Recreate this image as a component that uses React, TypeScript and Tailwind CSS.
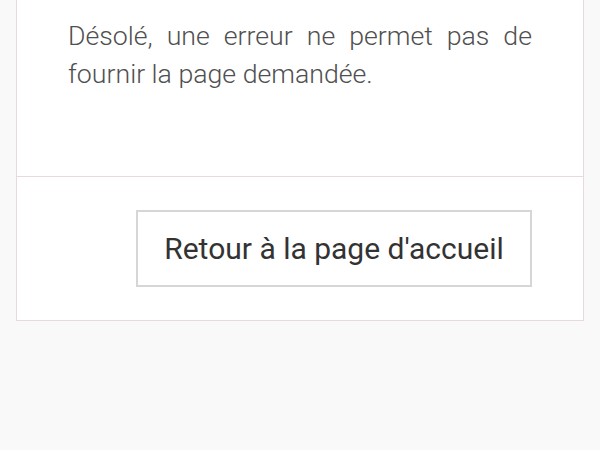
import React from "react";

const App = () => {
  return (
    <div className="min-h-[450px] w-[600px] bg-[#f9f9f9] pb-[129px]" style={{ fontFamily: "Roboto, sans-serif" }}>
      <div className="mx-[16px] border-x border-b border-[#e7d9dd] bg-white">
        <div className="h-[176px] px-[51px] pt-[17px]">
          <p className="text-justify text-[26.7px] leading-[38px] font-light text-[#505050]">
            Désolé, une erreur ne permet pas de fournir la page demandée.
          </p>
        </div>
        <div className="flex justify-end border-t border-[#e7d9dd] px-[51px] pt-[33px] pb-[33px]">
          <button
            type="button"
            className="flex h-[77px] w-[396px] items-center justify-center border-2 border-[#d6d6d6] bg-white text-[30px] text-[#333333]"
          >
            Retour à la page d'accueil
          </button>
        </div>
      </div>
    </div>
  );
};

export default App;
